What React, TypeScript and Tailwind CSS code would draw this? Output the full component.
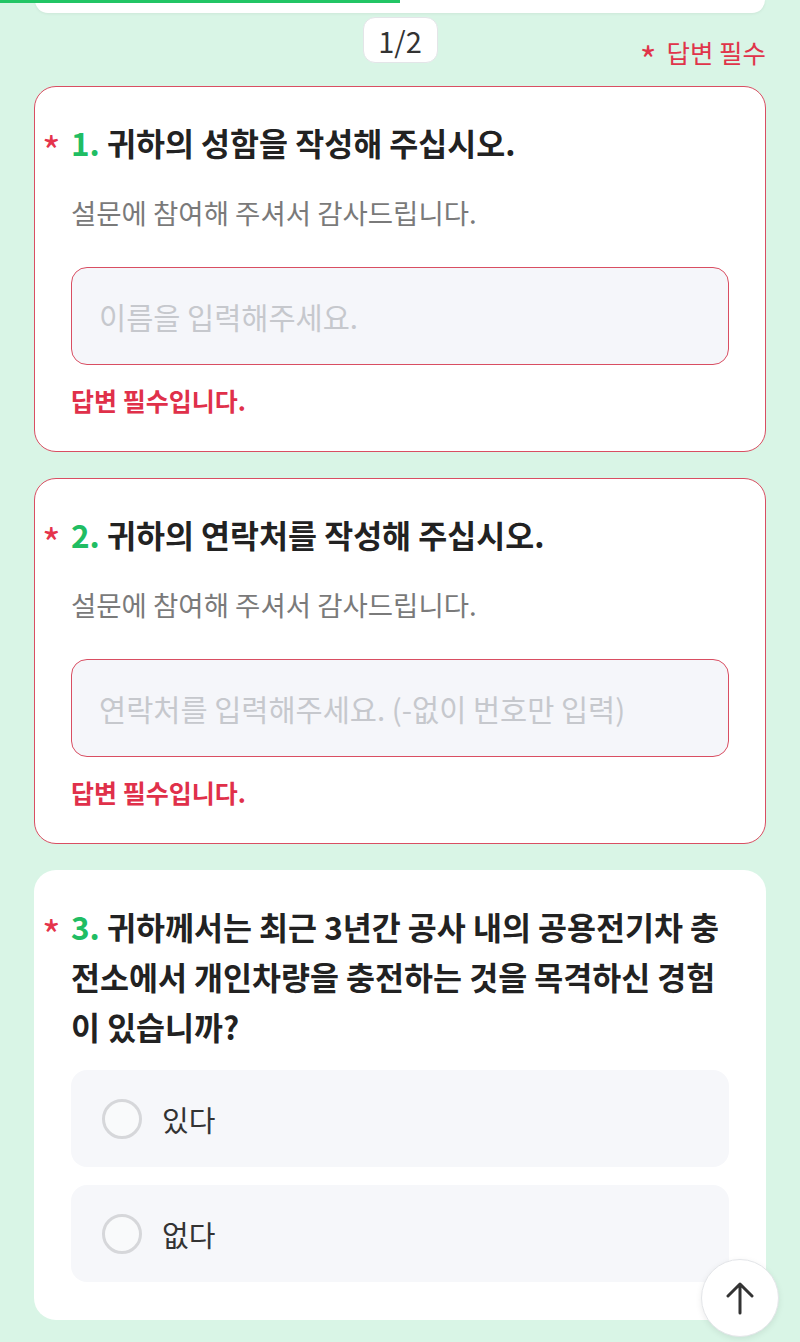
import React from "react";

function Star() {
  return (
    <span className="absolute left-[-29px] top-[8px] text-[40px] font-normal leading-[50px] text-[#e5344c]">
      *
    </span>
  );
}

function TextQuestion({
  num,
  title,
  placeholder,
}: {
  num: number;
  title: string;
  placeholder: string;
}) {
  return (
    <div className="rounded-[22px] border-[1.5px] border-[#d94e62] bg-white px-[36px] pt-[30px] pb-[34px]">
      <div className="relative text-[31.5px] font-bold leading-[50px] text-[#222222]">
        <Star />
        <span className="text-[#20bd63]">{num}. </span>
        {title}
      </div>
      <div className="mt-[28px] text-[27.5px] leading-[34px] text-[#7a7a7a]">
        설문에 참여해 주셔서 감사드립니다.
      </div>
      <input
        className="mt-[38px] block h-[98px] w-full rounded-[16px] border-[1.5px] border-[#d94e62] bg-[#f5f6fa] px-[27px] text-[29.5px] text-[#333] outline-none placeholder:text-[#c6c8cd]"
        placeholder={placeholder}
      />
      <div className="mt-[18px] text-[25px] font-bold leading-[34px] text-[#e0304a]">
        답변 필수입니다.
      </div>
    </div>
  );
}

function Option({ label }: { label: string }) {
  return (
    <div className="flex h-[97px] items-center gap-[20px] rounded-[16px] bg-[#f6f7fa] pl-[31px]">
      <span className="box-border h-[40px] w-[40px] rounded-full border-[3px] border-[#d6d7da] bg-[#f9fafb]" />
      <span className="text-[29px] leading-[34px] text-[#333333]">{label}</span>
    </div>
  );
}

export default function App() {
  return (
    <div className="relative min-h-[1342px] bg-[#d9f5e6] font-['Noto_Sans_CJK_KR',sans-serif]">
      {/* top progress + card remnant */}
      <div className="relative">
        <div className="mx-[35px] h-[13px] rounded-b-[20px] bg-white shadow-[0_1px_3px_rgba(0,0,0,0.06)]" />
        <div className="absolute left-0 top-0 h-[3px] w-1/2 bg-[#22c565]" />
      </div>

      {/* header row */}
      <div className="mt-[4px] grid grid-cols-[1fr_auto_1fr] items-end px-[34px]">
        <div />
        <div className="flex h-[46px] w-[75px] items-center justify-center rounded-[12px] border border-[#e3e5e8] bg-white text-[29px] leading-none text-[#333333]">
          1/2
        </div>
        <div className="flex translate-y-[4px] items-center justify-end gap-[10px] text-[25.5px] leading-[30px] text-[#e0344a]">
          <span className="translate-y-[6px] text-[36px]">*</span>
          <span>답변 필수</span>
        </div>
      </div>

      {/* cards */}
      <div className="mt-[23px] flex flex-col gap-[26px] px-[34px] pb-[40px]">
        <TextQuestion num={1} title="귀하의 성함을 작성해 주십시오." placeholder="이름을 입력해주세요." />
        <TextQuestion
          num={2}
          title="귀하의 연락처를 작성해 주십시오."
          placeholder="연락처를 입력해주세요. (-없이 번호만 입력)"
        />
        <div className="rounded-[22px] border-[1.5px] border-transparent bg-white px-[36px] pt-[30px] pb-[37px]">
          <div className="relative text-[31.5px] font-bold leading-[50px] text-[#222222]">
            <Star />
            <span className="text-[#20bd63]">3. </span>
            귀하께서는 최근 3년간 공사 내의 공용전기차 충
            <br />
            전소에서 개인차량을 충전하는 것을 목격하신 경험
            <br />이 있습니까?
          </div>
          <div className="mt-[19px] flex flex-col gap-[18px]">
            <Option label="있다" />
            <Option label="없다" />
          </div>
        </div>
      </div>

      {/* scroll-to-top */}
      <button className="fixed bottom-[5px] right-[21px] flex h-[78px] w-[78px] items-center justify-center rounded-full border border-[#e3e5e8] bg-white shadow-[0_2px_6px_rgba(0,0,0,0.08)]">
        <svg width="28" height="34" viewBox="0 0 28 34" fill="none">
          <path
            d="M14 3V32M2 15L14 3L26 15"
            stroke="#333333"
            strokeWidth="3"
            strokeLinecap="round"
            strokeLinejoin="round"
          />
        </svg>
      </button>
    </div>
  );
}
